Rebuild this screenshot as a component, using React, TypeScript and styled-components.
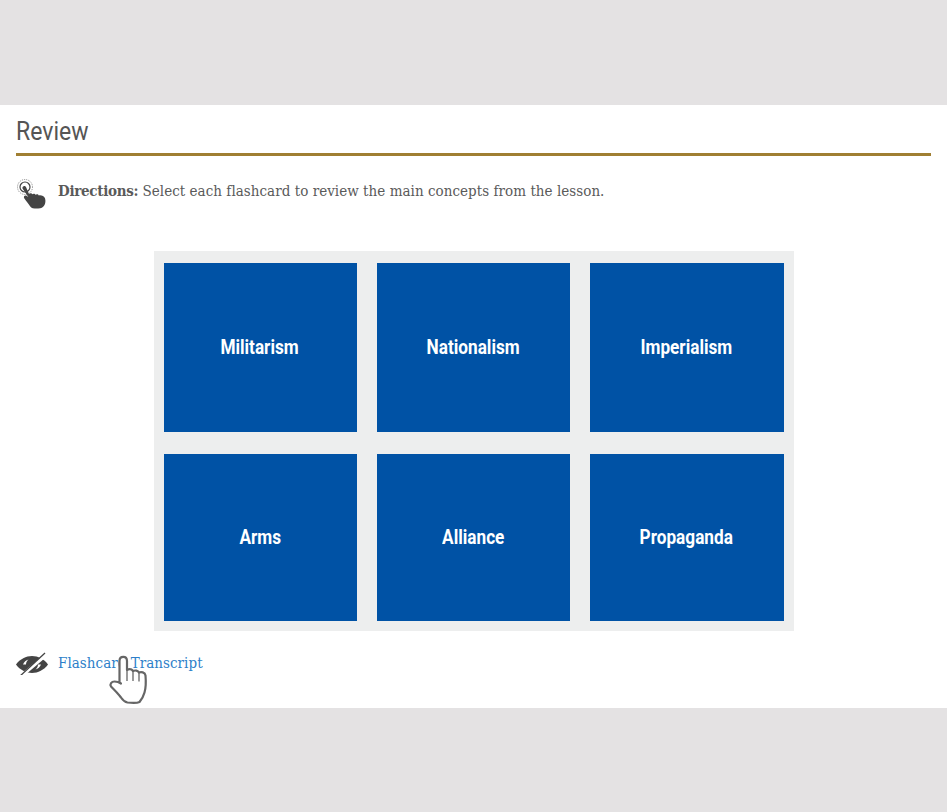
import React from "react";
import styled, { createGlobalStyle } from "styled-components";

const Global = createGlobalStyle`
  html, body { margin: 0; padding: 0; background: #e4e2e3; }
  #root { min-height: 812px; }
`;

const Page = styled.div`
  width: 947px;
  height: 812px;
  padding-top: 105px;
  box-sizing: border-box;
`;

const Sheet = styled.main`
  height: 603px;
  background: #fff;
  padding: 0 16px;
  box-sizing: border-box;
  position: relative;
`;

const Heading = styled.h1`
  margin: 0;
  height: 48px;
  border-bottom: 3px solid #a07f32;
  font: 400 26px/52px Roboto, sans-serif;
  color: #555;
`;

const HeadingText = styled.span`
  display: inline-block;
  transform: scaleX(0.885);
  transform-origin: left center;
`;

const IconRow = styled.div`
  display: flex;
  align-items: center;
  gap: 10px;
  color: #5a5a5a;
  font: 400 15px/20px "DejaVu Serif Condensed", "DejaVu Serif", serif;
  font-stretch: condensed;
  letter-spacing: 0.04px;
`;

const DirectionsRow = styled(IconRow)`
  height: 32px;
  margin-top: 18px;
  padding-top: 2px;
  box-sizing: border-box;
`;

const Strong = styled.b`
  font-weight: 700;
  letter-spacing: -0.3px;
`;

const Panel = styled.section`
  width: 640px;
  height: 380px;
  margin: 45px 0 0 138px;
  padding: 12px 10px 10px;
  box-sizing: border-box;
  background: #edeeee;
  display: grid;
  grid-template-columns: 193px 193px 194px;
  grid-template-rows: 169px 167px;
  column-gap: 20px;
  row-gap: 22px;
`;

const Card = styled.button`
  border: 0;
  padding: 0 1px 2px 0;
  background: #0052a5;
  color: #fff;
  display: flex;
  align-items: center;
  justify-content: center;
  font: 700 20px/24px Roboto, sans-serif;
`;

const CardLabel = styled.span`
  display: inline-block;
  transform: scaleX(0.86);
  white-space: nowrap;
`;

const TranscriptRow = styled(IconRow)`
  height: 24px;
  margin-top: 20px;
`;

const Link = styled.a`
  color: #2d7fc9;
  text-decoration: none;
`;

const HandIcon = styled.svg`
  flex: none;
  overflow: visible;
`;

const Cursor = styled.svg`
  position: absolute;
  left: 100px;
  top: 545px;
`;

const cards = ["Militarism", "Nationalism", "Imperialism", "Arms", "Alliance", "Propaganda"];

export default function App() {
  return (
    <>
      <Global />
      <Page>
        <Sheet>
          <Heading><HeadingText>Review</HeadingText></Heading>
          <DirectionsRow>
            <HandIcon width="32" height="30" viewBox="0 0 32 30" aria-hidden="true">
              <circle cx="9" cy="11" r="7.500" fill="none" stroke="#888" strokeWidth="1" strokeDasharray="1 1" />
              <circle cx="9" cy="11" r="5" fill="none" stroke="#444" strokeWidth="1.200" />
              <path d="M6.500 12.500c-.6-2.400 2.500-3.800 3.600-1.300L13 18c.8-1.200 2.800-1 3.300.3.900-1 2.800-.8 3.300.5.900-.9 2.800-.6 3.200.7 2-.7 5.400.6 6.200 2.700.8 2.500.5 5.300-.8 7.200-1.200 2-3 3-6 3h-3.500c-3 0-4.500-1.400-5.500-3.400-1-1.900-2.700-3.300-5-6.800-1-1.800.8-3.600 2.600-2.300l1.500 1.100z" fill="#444" />
            </HandIcon>
            <span><Strong>Directions:</Strong> Select each flashcard to review the main concepts from the lesson.</span>
          </DirectionsRow>
          <Panel>
            {cards.map((c) => (
              <Card key={c}><CardLabel>{c}</CardLabel></Card>
            ))}
          </Panel>
          <TranscriptRow>
            <svg width="32" height="24" viewBox="0 0 32 24" aria-hidden="true">
              <path d="M0 13.500C4 8 10 5 16 5s12 3 16 8.500C28 19 22 22 16 22S4 19 0 13.500z" fill="#444" />
              <path d="M7 13.500c1-2.500 3-4.500 5.500-5-1.500 1.200-2.500 3-2.500 5zM25 13.500c-1 2.500-3 4.500-5.500 5 1.500-1.200 2.500-3 2.500-5z" fill="#fff" />
              <path d="M4 26L30 4" stroke="#fff" strokeWidth="3.500" />
              <path d="M3 26L29 2" stroke="#444" strokeWidth="1.300" />
            </svg>
            <Link>Flashcard Transcript</Link>
          </TranscriptRow>
          <Cursor width="55" height="58" viewBox="0 0 55 58" aria-hidden="true">
            <path d="M19.500 32V11c0-5.500 7.500-5.500 7.500 0v9c2-1 4.500-1 6 1 2-1 5-.5 6 1.500 2-.8 6-.5 6.500 3 .5 6 .5 12-1 17-1 4-3 7-5 9.500-2 1-8 1-12 .5-3-.5-4.500-2-6.500-5-3-4-6-7-10-11-1.500-2.500.5-5 3.500-5 3 0 5 1 6.500 2z" fill="#fff" stroke="#666" strokeWidth="2.200" strokeLinejoin="round" />
            <path d="M27 20v11M33 21v10M39 22.500v9" stroke="#666" strokeWidth="1.300" fill="none" />
          </Cursor>
        </Sheet>
      </Page>
    </>
  );
}
